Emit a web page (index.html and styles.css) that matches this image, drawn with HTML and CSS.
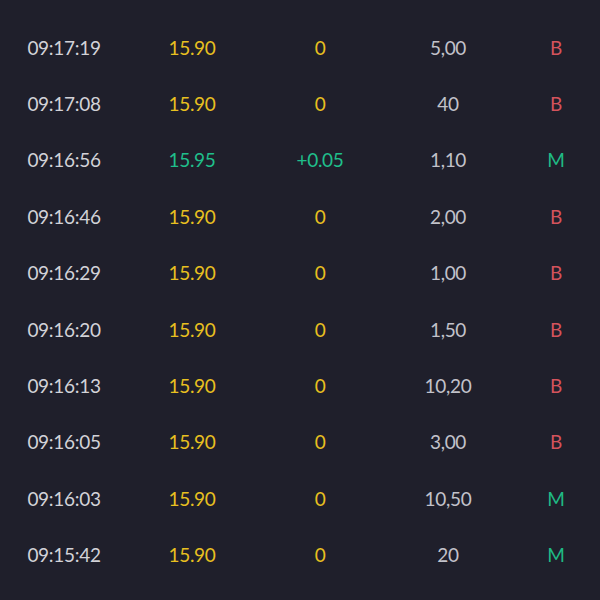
FILE: index.html
```html
<!DOCTYPE html>
<html lang="en">
  <head>
    <meta charset="UTF-8" />
    <meta name="viewport" content="width=device-width, initial-scale=1.0" />
    <title>Trades</title>
    <link rel="stylesheet" href="styles.css">
  </head>
  <body>
    <div class="trades">
      <div class="trade"><span class="time">09:17:19</span><span class="flat">15.90</span><span class="flat">0</span><span>5,00</span><span class="sell">B</span></div>
      <div class="trade"><span class="time">09:17:08</span><span class="flat">15.90</span><span class="flat">0</span><span>40</span><span class="sell">B</span></div>
      <div class="trade"><span class="time">09:16:56</span><span class="up">15.95</span><span class="up">+0.05</span><span>1,10</span><span class="buy">M</span></div>
      <div class="trade"><span class="time">09:16:46</span><span class="flat">15.90</span><span class="flat">0</span><span>2,00</span><span class="sell">B</span></div>
      <div class="trade"><span class="time">09:16:29</span><span class="flat">15.90</span><span class="flat">0</span><span>1,00</span><span class="sell">B</span></div>
      <div class="trade"><span class="time">09:16:20</span><span class="flat">15.90</span><span class="flat">0</span><span>1,50</span><span class="sell">B</span></div>
      <div class="trade"><span class="time">09:16:13</span><span class="flat">15.90</span><span class="flat">0</span><span>10,20</span><span class="sell">B</span></div>
      <div class="trade"><span class="time">09:16:05</span><span class="flat">15.90</span><span class="flat">0</span><span>3,00</span><span class="sell">B</span></div>
      <div class="trade"><span class="time">09:16:03</span><span class="flat">15.90</span><span class="flat">0</span><span>10,50</span><span class="buy">M</span></div>
      <div class="trade"><span class="time">09:15:42</span><span class="flat">15.90</span><span class="flat">0</span><span>20</span><span class="buy">M</span></div>
    </div>
  </body>
</html>
```

FILE: styles.css
```css
* {
  margin: 0;
  padding: 0;
}

body {
  width: 600px;
  height: 600px;
  overflow: hidden;
  background: #1f1f2b;
  font-family: Lato, "Noto Sans", sans-serif;
  color: #c2c2ca;
}

.trades {
  padding-top: 19px;
}

.trade {
  display: grid;
  grid-template-columns: 128px 128px 128px 128px 88px;
  align-items: center;
  height: 56.4px;
  font-size: 19px;
  letter-spacing: -0.3px;
}

.trade span {
  text-align: center;
}

.trade .time {
  color: #d2d2d8;
}

.flat {
  color: #e8c020;
}

.up {
  color: #1fbf8b;
}

.sell {
  color: #d4535c;
}

.buy {
  color: #1fb985;
}
```
